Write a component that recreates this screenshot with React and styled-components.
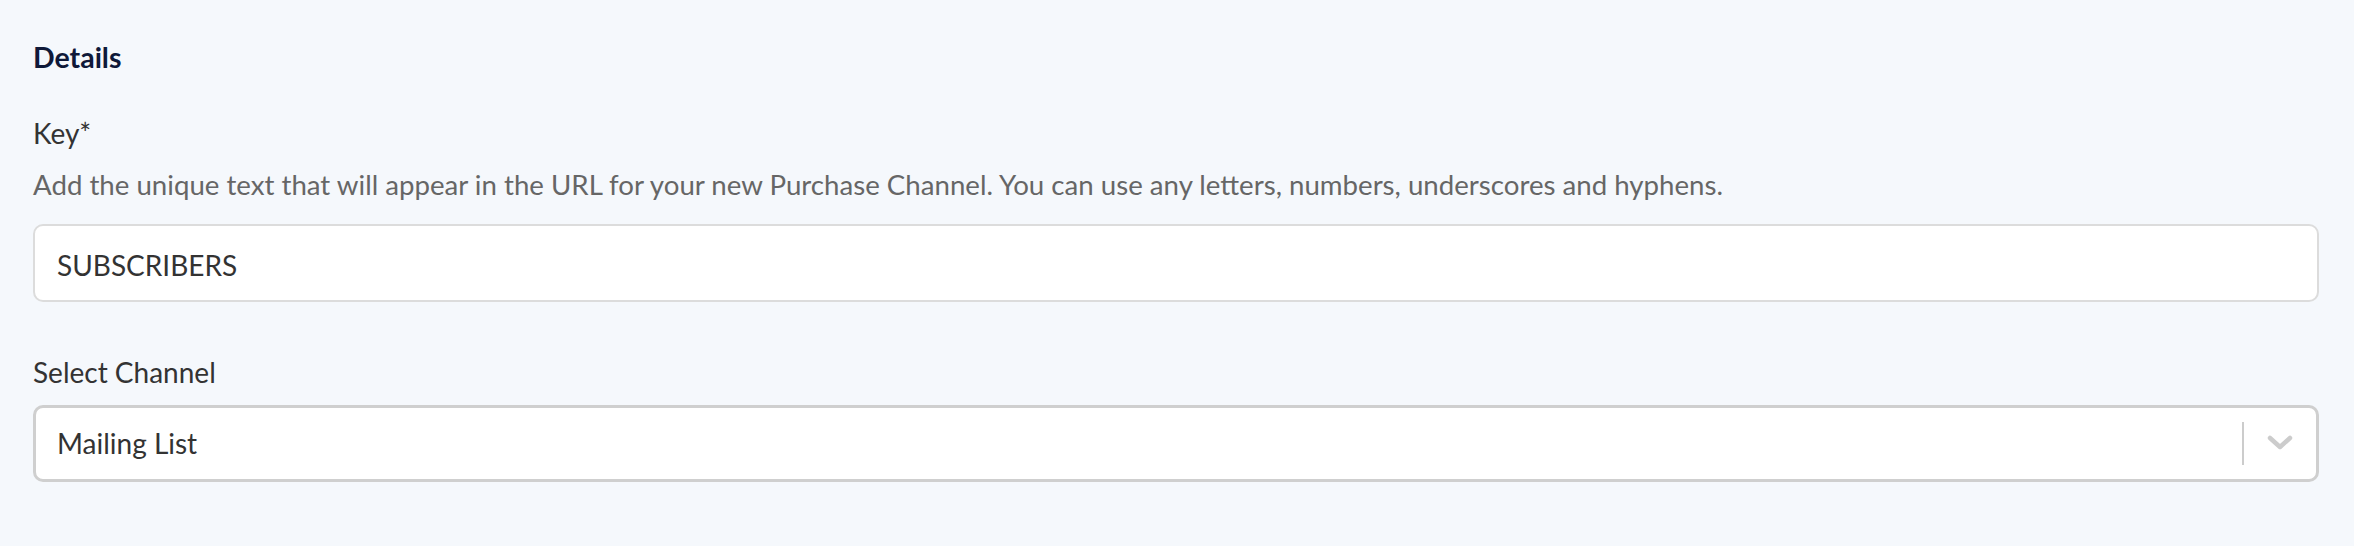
import React from 'react';
import styled, { createGlobalStyle } from 'styled-components';

const GlobalStyle = createGlobalStyle`
	html, body {
		margin: 0;
		padding: 0;
		background: #f5f8fc;
	}
	body {
		font-family: Lato, 'Noto Sans', 'Liberation Sans', sans-serif;
	}
`;

const Page = styled.div`
	min-height: 546px;
	box-sizing: border-box;
	padding: 38.5px 35px 0 33px;
	background: #f5f8fc;
`;

const Heading = styled.h2`
	margin: 0;
	font-size: 28.5px;
	line-height: 36px;
	font-weight: 700;
	color: #0f1939;
`;

const Field = styled.div`
	display: flex;
	flex-direction: column;
	margin-top: ${(p) => p.$top}px;
`;

const Label = styled.label`
	font-size: 28px;
	line-height: 36px;
	color: #333;
`;

const Hint = styled.p`
	margin: 16.5px 0 0;
	font-size: 27.65px;
	line-height: 36px;
	color: #666;
`;

const TextInput = styled.input`
	box-sizing: border-box;
	height: 78px;
	margin-top: ${(p) => p.$top}px;
	padding: 4px 22px 0;
	border: 2px solid #dcdcdc;
	border-radius: 10px;
	background: #fff;
	font-family: inherit;
	font-size: 28px;
	color: #333;
	outline: none;
`;

const Control = styled.div`
	box-sizing: border-box;
	display: flex;
	align-items: center;
	height: 77px;
	margin-top: 15px;
	border: 3px solid #cfcfcf;
	border-radius: 10px;
	background: #fff;
`;

const Value = styled.div`
	flex: 1;
	padding: 0 0 0 21px;
	font-size: 28px;
	color: #333;
`;

const Separator = styled.span`
	align-self: stretch;
	width: 2px;
	margin: 14px 0;
	background: #cccccc;
`;

const Indicator = styled.div`
	display: flex;
	align-items: center;
	justify-content: center;
	width: 72px;
	color: #cccccc;
`;

const Chevron = () => (
	<svg width="26" height="16" viewBox="0 0 26 16" fill="none">
		<path
			d="M3 3 L13 12 L23 3"
			stroke="currentColor"
			strokeWidth="4.5"
			strokeLinecap="round"
			strokeLinejoin="round"
		/>
	</svg>
);

const App = () => {
	return (
		<>
			<GlobalStyle />
			<Page>
				<Heading>Details</Heading>
				<Field $top={40}>
					<Label>Key*</Label>
					<Hint>
						Add the unique text that will appear in the URL for your new Purchase Channel. You can use any
						letters, numbers, underscores and hyphens.
					</Hint>
					<TextInput $top={20.5} defaultValue='SUBSCRIBERS' />
				</Field>
				<Field $top={52}>
					<Label>Select Channel</Label>
					<Control>
						<Value>Mailing List</Value>
						<Separator />
						<Indicator>
							<Chevron />
						</Indicator>
					</Control>
				</Field>
			</Page>
		</>
	);
};

export default App;
